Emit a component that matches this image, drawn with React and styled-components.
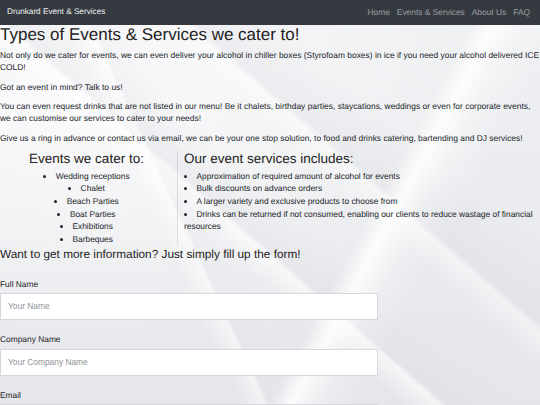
import React from "react";
import styled, { createGlobalStyle } from "styled-components";

const GlobalStyle = createGlobalStyle`
  html {
    background-color: #e8e9ed;
    background-image:
      linear-gradient(118deg, rgba(255,255,255,0) 64%, rgba(255,255,255,0.85) 67%, rgba(255,255,255,0.25) 71%, rgba(255,255,255,0) 76%),
      linear-gradient(65deg, rgba(255,255,255,0) 33%, rgba(255,255,255,0.55) 36.4%, rgba(225,226,231,0.2) 37%, rgba(255,255,255,0) 44%),
      linear-gradient(41deg, rgba(255,255,255,0) 40%, rgba(255,255,255,0.6) 43.8%, rgba(218,219,225,0.3) 44.5%, rgba(218,219,225,0) 52%),
      linear-gradient(41deg, rgba(255,255,255,0) 58%, rgba(255,255,255,0.45) 62%, rgba(216,217,223,0.3) 63%, rgba(216,217,223,0) 72%),
      radial-gradient(ellipse 75% 65% at 15% 25%, rgba(251,251,252,0.95) 0%, rgba(251,251,252,0) 100%),
      linear-gradient(180deg, #f0f1f3 0%, #e5e6ea 100%);
    background-attachment: fixed;
  }
  body {
    margin: 0;
    font-family: "Liberation Sans", Arial, sans-serif;
    font-size: 8.4px;
    line-height: 12.6px;
    color: #212529;
    text-rendering: geometricPrecision;
  }
  * { box-sizing: border-box; }
`;

const Navbar = styled.nav`
  display: flex;
  align-items: center;
  justify-content: space-between;
  height: 25px;
  padding: 0 6.5px 0 7px;
  background: #343a40;
`;

const Brand = styled.span`
  font-size: 8.2px;
  color: #f1f1f1;
`;

const NavLinks = styled.div`
  display: flex;
`;

const NavLink = styled.a`
  padding: 0 3.5px;
  font-size: 8.4px;
  color: rgba(255, 255, 255, 0.5);
  text-decoration: none;
`;

const Main = styled.main`
  display: flex;
  flex-direction: column;
`;

const Title = styled.h1`
  margin: 0 0 3.3px;
  font-size: 17px;
  line-height: 1.2;
  font-weight: 400;
  color: #222;
`;

const Para = styled.p`
  margin: 0 0 6.7px;
  letter-spacing: 0.025px;
`;

const Columns = styled.section`
  display: grid;
  grid-template-columns: 177px 1fr;
`;

const Column = styled.div`
  display: flex;
  flex-direction: column;
  text-align: ${(p) => (p.$center ? "center" : "left")};
  padding-left: ${(p) => (p.$divided ? "6px" : "0")};
  padding-right: ${(p) => (p.$center ? "4px" : "0")};
  border-left: ${(p) => (p.$divided ? "1px solid rgba(0,0,0,0.1)" : "none")};
`;

const ColHeading = styled.h3`
  margin: 0 0 2.7px;
  font-size: 13.5px;
  line-height: 1.2;
  font-weight: 400;
  color: #222;
`;

const List = styled.ul`
  margin: 0;
  padding: 0;
  list-style: disc inside;
`;

const FormHeading = styled.h4`
  margin: 1.7px 0 16px;
  font-size: 11.8px;
  line-height: 1.25;
  font-weight: 400;
  color: #222;
`;

const Form = styled.form`
  display: flex;
  flex-direction: column;
`;

const FieldGroup = styled.div`
  display: flex;
  flex-direction: column;
  margin-bottom: 13.5px;
`;

const Label = styled.label`
  margin-bottom: 2.5px;
  color: #212529;
`;

const Input = styled.input`
  width: 70%;
  height: 27px;
  padding: 0 7px;
  border: 1px solid #d6d8db;
  border-radius: 0;
  background: #fff;
  font-family: "Liberation Sans", Arial, sans-serif;
  font-size: 8.4px;
  color: #495057;
  outline: none;
  &::placeholder {
    color: #8e9296;
  }
`;

const fields = [
  { label: "Full Name", placeholder: "Your Name", type: "text" },
  { label: "Company Name", placeholder: "Your Company Name", type: "text" },
  { label: "Email", placeholder: "Your Email", type: "email" },
  { label: "Contact Number", placeholder: "Your Contact Number", type: "tel" },
];

export default function App() {
  return (
    <>
      <GlobalStyle />
      <Navbar>
        <Brand>Drunkard Event &amp; Services</Brand>
        <NavLinks>
          <NavLink href="#">Home</NavLink>
          <NavLink href="#">Events &amp; Services</NavLink>
          <NavLink href="#">About Us</NavLink>
          <NavLink href="#">FAQ</NavLink>
        </NavLinks>
      </Navbar>
      <Main>
        <Title>Types of Events &amp; Services we cater to!</Title>
        <Para>
          Not only do we cater for events, we can even deliver your alcohol in chiller boxes
          (Styrofoam boxes) in ice if you need your alcohol delivered ICE COLD!
        </Para>
        <Para>Got an event in mind? Talk to us!</Para>
        <Para>
          You can even request drinks that are not listed in our menu! Be it chalets, birthday
          parties, staycations, weddings or even for corporate events, we can customise our
          services to cater to your needs!
        </Para>
        <Para>
          Give us a ring in advance or contact us via email, we can be your one stop solution, to
          food and drinks catering, bartending and DJ services!
        </Para>
        <Columns>
          <Column $center>
            <ColHeading>Events we cater to:</ColHeading>
            <List>
              <li>
                Wedding receptions
                <List>
                  <li>Chalet</li>
                </List>
              </li>
              <li>Beach Parties</li>
              <li>Boat Parties</li>
              <li>Exhibitions</li>
              <li>Barbeques</li>
            </List>
          </Column>
          <Column $divided>
            <ColHeading>Our event services includes:</ColHeading>
            <List>
              <li>Approximation of required amount of alcohol for events</li>
              <li>Bulk discounts on advance orders</li>
              <li>A larger variety and exclusive products to choose from</li>
              <li>
                Drinks can be returned if not consumed, enabling our clients to reduce wastage of
                financial resources
              </li>
            </List>
          </Column>
        </Columns>
        <FormHeading>Want to get more information? Just simply fill up the form!</FormHeading>
        <Form>
          {fields.map((f) => (
            <FieldGroup key={f.label}>
              <Label>{f.label}</Label>
              <Input type={f.type} placeholder={f.placeholder} />
            </FieldGroup>
          ))}
        </Form>
      </Main>
    </>
  );
}
